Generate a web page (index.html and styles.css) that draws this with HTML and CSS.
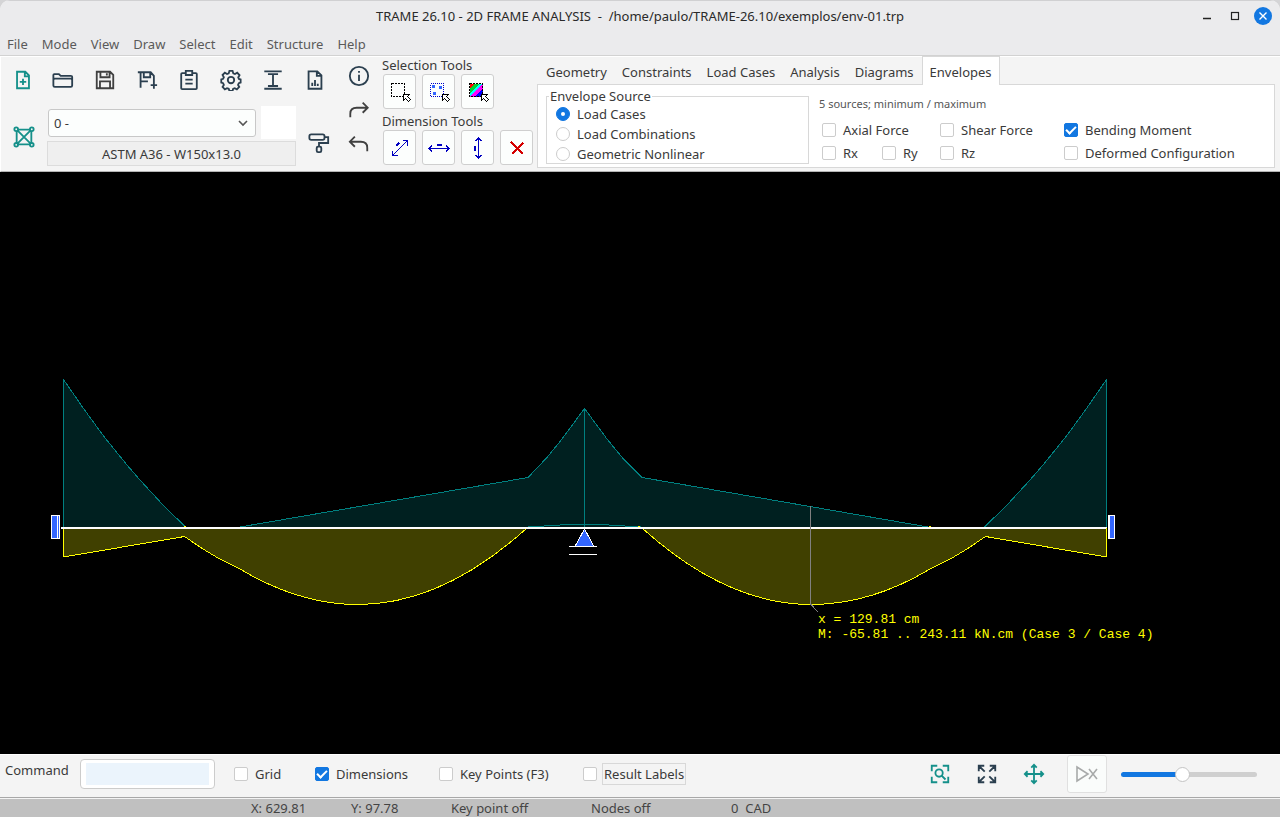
FILE: index.html
```html
<!DOCTYPE html>
<html lang="en">
<head>
<meta charset="utf-8">
<title>TRAME 26.10 - 2D FRAME ANALYSIS</title>
<link rel="stylesheet" href="styles.css">
</head>
<body>
<div class="window">
  <header class="titlebar">
    <h1 class="title">TRAME 26.10 - 2D FRAME ANALYSIS &nbsp;-&nbsp; /home/paulo/TRAME-26.10/exemplos/env-01.trp</h1>
    <div class="window-buttons">
      <button class="winbtn" aria-label="Minimize"><svg width="18" height="18"><path d="M5 11.5h8" stroke="#222" stroke-width="1.4"/></svg></button>
      <button class="winbtn" aria-label="Maximize"><svg width="18" height="18"><rect x="5.5" y="5.5" width="7" height="7" fill="none" stroke="#222" stroke-width="1.2"/></svg></button>
      <button class="winbtn" aria-label="Close"><svg width="18" height="18"><circle cx="9" cy="9" r="9" fill="#1277e1"/><path d="M5.5 5.5l7 7m0-7l-7 7" stroke="#fff" stroke-width="1.4"/></svg></button>
    </div>
  </header>
  <nav class="menubar">
    <button>File</button><button>Mode</button><button>View</button><button>Draw</button><button>Select</button><button>Edit</button><button>Structure</button><button>Help</button>
  </nav>

  <section class="toolbar">
    <div class="file-area">
      <div class="icon-row">
        <button class="tool first teal" aria-label="New"><svg class="ico" viewBox="0 0 24 24"><path d="M5.500 3h9l4 4v14h-13z M14 3v5h5 M12 10.500v7 M8.500 14h7"/></svg></button>
        <button class="tool" aria-label="Open"><svg class="ico" viewBox="0 0 24 24"><path d="M1.500 18V6.500q0-1 1-1h5l2 2h11q1.500 0 1.500 1V18q0 1.500-1.500 1.500h-17.500Q1.500 19.500 1.500 18z M1.500 12q0-1.500 1.500-1.500h17.500q1.500 0 1.500 1.500"/></svg></button>
        <button class="tool dark" aria-label="Save"><svg class="ico" viewBox="0 0 24 24"><path d="M3 3h14.500l3.500 3.500V21H3z M7 3v6h10V3 M14 4.500v2.500 M6.500 21v-7.500h11V21"/></svg></button>
        <button class="tool" aria-label="Save as"><svg class="ico" viewBox="0 0 24 24"><path d="M2 3.500h14l3.500 4V17 M5 4v16.500 M8.500 4v5h7V4 M5 13.500h8 M16 17.500h7 M19.500 14v7.500"/></svg></button>
        <button class="tool" aria-label="Clipboard"><svg class="ico" viewBox="0 0 24 24"><path d="M8 4.500H4.500Q3.500 4.500 3.500 5.500V21q0 1 1 1h15q1 0 1-1V5.500q0-1-1-1H16 M8.500 2h7v4.500h-7z M8 11.500h8 M8 16h8"/></svg></button>
        <button class="tool" aria-label="Settings"><svg class="ico" viewBox="0 0 24 24"><circle cx="12" cy="12" r="3.500"/><path d="M10.300 2h3.400l.8 2.800 1.800.7 2.500-1.400 2.500 2.600-1.400 2.500.7 1.700 1.900.5v3.400l-2 .7-.8 1.800 1.300 2.300-2.600 2.600-2.400-1.300-1.700.7-.6 2.400h-3.400l-.8-2.400-1.800-.7-2.400 1.300-2.500-2.600 1.400-2.300-.8-1.800-2-.6v-3.600l2-.6.8-1.700-1.400-2.500 2.500-2.400 2.400 1.400 1.800-.7z"/></svg></button>
        <button class="tool" aria-label="Profile"><svg class="ico" viewBox="0 0 24 24"><path d="M2.500 2.500h19 M6.500 5.500h11 M12 5.500v13 M6.500 18.500h11 M2.500 21.500h19"/></svg></button>
        <button class="tool" aria-label="Report"><svg class="ico" viewBox="0 0 24 24"><path d="M5 2.500h9.500l4.500 4.500v14.500h-14z M14 2.500v5h5 M9 18.500v-3.500 M12 18.500v-6.500 M15 18.500v-2.500"/></svg></button>
      </div>
      <div class="section-row">
        <button class="tool truss teal" aria-label="Frame"><svg class="ico" viewBox="0 0 24 24"><path d="M4 4h16 M4 20h16 M4 4v16 M20 4v16 M4 4l16 16 M20 4L4 20"/><g fill="#f4f4f4"><circle cx="3.500" cy="3.500" r="2"/><circle cx="20.500" cy="3.500" r="2"/><circle cx="3.500" cy="20.500" r="2"/><circle cx="20.500" cy="20.500" r="2"/></g></svg></button>
        <div class="section-picker">
          <div class="picker-row">
            <div class="combo"><select aria-label="Section"><option>0 -</option></select><svg width="10" height="7"><path d="M1 1l4 4 4-4" fill="none" stroke="#555" stroke-width="1.600"/></svg></div>
            <span class="swatch"></span>
          </div>
          <button class="section-name">ASTM A36 - W150x13.0</button>
        </div>
        <button class="tool roller" aria-label="Paint"><svg class="ico" viewBox="0 0 24 24"><rect x="1.500" y="2.500" width="16.500" height="6" rx="2"/><path d="M18 5.500h4V12h-10v4"/><rect x="9.500" y="16" width="5" height="6" rx="1.500"/></svg></button>
      </div>
    </div>

    <div class="history">
      <button class="tool" aria-label="Information"><svg class="ico" viewBox="0 0 24 24"><circle cx="12" cy="12" r="10"/><path d="M12 10.500V17.500 M12 6.500v2"/></svg></button>
      <button class="tool dark" aria-label="Redo"><svg class="ico" viewBox="0 0 24 24"><path d="M2.500 20v-4q0-6.500 7-6.500h12 M16 4l5.500 5.500-5.500 5.500"/></svg></button>
      <button class="tool dark" aria-label="Undo"><svg class="ico" viewBox="0 0 24 24"><path d="M21 20v-4q0-6.500-7-6.500h-12 M7.500 4l-5.500 5.500 5.500 5.500"/></svg></button>
    </div>

    <div class="tool-groups">
      <h2>Selection Tools</h2>
      <div class="tiles">
        <button class="tile" aria-label="Select window"><svg width="24" height="24" shape-rendering="crispEdges"><rect x="3.500" y="3.500" width="13" height="13" fill="none" stroke="#000" stroke-dasharray="2 1"/><use href="#cursor"/></svg></button>
        <button class="tile" aria-label="Select nodes"><svg width="24" height="24" shape-rendering="crispEdges"><rect x="3.500" y="3.500" width="13" height="13" fill="none" stroke="#0000c8" stroke-dasharray="1 1"/><path d="M5 5h3v3H5z M12 6h3v3h-3z M6 12h3v3H6z" fill="#3366ff"/><use href="#cursor"/></svg></button>
        <button class="tile" aria-label="Select by color"><svg width="24" height="24" shape-rendering="crispEdges"><defs><clipPath id="sq"><path d="M4 4h13v13H4z"/></clipPath><g id="cursor"><path d="M15.500 14.500h6l-2 2 3 3-2 2-3-3-2 2z" fill="#fff" stroke="#000"/></g></defs><g clip-path="url(#sq)"><path fill="#ff0" d="M4 4h13v13H4z"/><path fill="red" d="M4 4h5L4 9z"/><path fill="#00d030" d="M8 4h5L4 13V8z"/><path fill="#0ff" d="M13 4h3L4 16v-3z"/><path fill="#f0f" d="M16 4h1v4L8 17H4v-1z"/><path fill="#00f" d="M17 8v5l-4 4H8z"/></g><rect x="3.500" y="3.500" width="13" height="13" fill="none" stroke="#000" stroke-dasharray="2 1"/><use href="#cursor"/></svg></button>
      </div>
      <h2>Dimension Tools</h2>
      <div class="tiles">
        <button class="tile" aria-label="Aligned dimension"><svg width="24" height="24" shape-rendering="crispEdges" class="dim"><path d="M4.500 19.500L19.500 4.500 M4.500 14.500v5H9.500 M14.500 4.500h5V9.500"/><path d="M8 10l3-3" stroke-width="2"/></svg></button>
        <button class="tile" aria-label="Horizontal dimension"><svg width="24" height="24" shape-rendering="crispEdges" class="dim"><path d="M2 12.500h20 M5 9.500l-3 3 3 3 M19 9.500l3 3-3 3"/><path d="M10 9h5" stroke-width="2"/></svg></button>
        <button class="tile" aria-label="Vertical dimension"><svg width="24" height="24" shape-rendering="crispEdges" class="dim"><path d="M12.500 2v20 M9.500 5l3-3 3 3 M9.500 19l3 3 3-3"/><path d="M9 10v5" stroke-width="2"/></svg></button>
        <button class="tile" aria-label="Delete dimension"><svg width="24" height="24" shape-rendering="crispEdges"><path d="M6 6l12 12" stroke="#d40000" stroke-width="1.500"/><path d="M18 7L7 18" stroke="#d40000" stroke-width="2"/></svg></button>
      </div>
    </div>

    <div class="notebook">
      <div class="tabs" role="tablist">
        <button role="tab">Geometry</button><button role="tab">Constraints</button><button role="tab">Load Cases</button><button role="tab">Analysis</button><button role="tab">Diagrams</button><button role="tab" class="active" aria-selected="true">Envelopes</button>
      </div>
      <div class="panel" role="tabpanel">
        <fieldset class="source">
          <legend>Envelope Source</legend>
          <label><input type="radio" name="source" checked>Load Cases</label>
          <label><input type="radio" name="source">Load Combinations</label>
          <label><input type="radio" name="source">Geometric Nonlinear</label>
        </fieldset>
        <div class="results">
          <p class="summary">5 sources; minimum / maximum</p>
          <div class="checks">
            <label class="wide"><input type="checkbox">Axial Force</label>
            <label><input type="checkbox">Shear Force</label>
            <label><input type="checkbox" checked>Bending Moment</label>
            <label><input type="checkbox">Rx</label>
            <label><input type="checkbox">Ry</label>
            <label><input type="checkbox">Rz</label>
            <label><input type="checkbox">Deformed Configuration</label>
          </div>
        </div>
      </div>
    </div>
  </section>

  <main class="canvas">
    <svg class="drawing" viewBox="0 0 1280 582" role="img" aria-label="Bending moment envelope">
      <g shape-rendering="crispEdges">
        <g class="negative">
          <path d="M63.500 356V207.500L83.500 236.500 103.500 264 127 293 140 308 163 333 186 355.500V356z"/>
          <path d="M237 355.500L528 305.500 547 285.500 562 267 584.500 236.500 607 267 623 286.500 642 305.500 810 334.500 931 355.500z"/>
          <path d="M528 355L568 352.500H601L641 355 M584.500 236.500V356 M1106.500 356V207.500L1086.500 236.500 1066.500 264 1043 293 1030 308 1007 333 984 355.500V356z"/>
        </g>
        <g class="positive">
          <path d="M63.500 356V385L184.500 364.500 203 377 218 386 240 397Q299 432.500 358 432.500 442.500 432.500 527 356z"/>
          <path d="M642 356Q726.500 432.500 811 432.500 871 432.500 930 397L952 386 967 377 985.500 364.500 1106.500 385V356z"/>
        </g>
        <path d="M61 356H1107" stroke="#fff" stroke-width="2"/>
        <path d="M1106.500 356V385" stroke="#ff0"/>
        <path d="M184 354.500h2 M638 354.500h2 M929 354.500h2" stroke="#ff0"/>
        <path d="M810.500 334V432L818 440" fill="none" stroke="#808080"/>
        <g fill="#3366ff" stroke="#fff">
          <rect x="51.500" y="343.500" width="8" height="23"/><path d="M57.500 344V367"/>
          <rect x="1109.500" y="343.500" width="5" height="23"/><path d="M1108.500 343V367"/>
          <path d="M584.500 357L575 374.500H594z"/>
          <path d="M569 374.500H597 M569 382.500H597"/>
        </g>
      </g>
      <text class="readout" x="818" y="451">x = 129.81 cm</text>
      <text class="readout" x="818" y="466">M: -65.81 .. 243.11 kN.cm (Case 3 / Case 4)</text>
    </svg>
  </main>

  <section class="commandbar">
    <label class="command-label" for="command">Command</label>
    <input class="command" id="command" type="text">
    <div class="options">
      <label><input type="checkbox">Grid</label>
      <label><input type="checkbox" checked>Dimensions</label>
      <label><input type="checkbox">Key Points (F3)</label>
      <label><input type="checkbox"><span class="focused">Result Labels</span></label>
    </div>
    <div class="view-tools">
      <button class="tool teal" aria-label="Zoom window"><svg class="ico" viewBox="0 0 24 24"><path d="M3 9V3h6 M15 3h6v6 M21 15v6h-6 M9 21H3v-6 M13.500 13.500L18 18"/><circle cx="11" cy="11" r="4"/></svg></button>
      <button class="tool" aria-label="Zoom all"><svg class="ico" viewBox="0 0 24 24"><path d="M3 9V3h6 M3 3l6.500 6.500 M15 3h6v6 M21 3l-6.500 6.500 M21 15v6h-6 M21 21l-6.500-6.500 M9 21H3v-6 M3 21l6.500-6.500"/></svg></button>
      <button class="tool teal" aria-label="Pan"><svg class="ico" viewBox="0 0 24 24"><path d="M12 2v20 M2 12h20 M9 5l3-3 3 3 M9 19l3 3 3-3 M5 9l-3 3 3 3 M19 9l3 3-3 3"/></svg></button>
    </div>
    <button class="step" aria-label="Animate" disabled><svg width="24" height="18"><path d="M2 2v14l11-7z M14 4l8 10 M22 4l-8 10" fill="none" stroke="#a8aaaa" stroke-width="1.600"/></svg></button>
    <input class="slider" type="range" min="0" max="100" value="45" aria-label="Scale">
  </section>

  <footer class="statusbar">
    <span>X: 629.81</span><span>Y: 97.78</span><span>Key point off</span><span>Nodes off</span><span>0 &nbsp;CAD</span>
  </footer>
</div>
</body>
</html>
```
FILE: styles.css
```css
* { box-sizing: border-box; }
html { background: #d4d4d6; }
body {
  margin: 0;
  font: 13px/18px "Noto Sans", sans-serif;
  color: #3a3a3a;
}
button, input, select { font: inherit; color: inherit; margin: 0; }
button { border: 0; padding: 0; background: none; }
h1, h2, p { margin: 0; font: inherit; }

.window {
  display: flex;
  flex-direction: column;
  min-height: 100vh;
  background: #f4f4f4;
  border-radius: 10px 10px 0 0;
  overflow: hidden;
}

.titlebar {
  display: grid;
  grid-template-columns: 1fr auto 1fr;
  align-items: center;
  height: 32px;
  padding-bottom: 1px;
  background: #ebebed;
  box-shadow: inset 0 1px #d0d0d2;
}
.title { grid-column: 2; color: #2a2a2a; }
.window-buttons { display: flex; justify-content: flex-end; gap: 10px; padding-right: 8px; }
.winbtn, .winbtn svg { display: block; }

.menubar {
  display: flex;
  gap: 14px;
  height: 24px;
  padding: 0 7px;
  background: #ebebed;
  border-bottom: 1px solid #d2d2d2;
  color: #5a5a5a;
}

.toolbar {
  display: flex;
  height: 116px;
  border-left: 1px solid #fff;
  border-bottom: 1px solid #b4b4b4;
  box-shadow: inset 0 1px #fff;
}
.tool { display: grid; place-items: center; width: 42px; color: #2b3f4f; }
.tool.teal { color: #15908a; }
.tool.dark { color: #404040; }
.ico {
  width: 22px;
  height: 22px;
  fill: none;
  stroke: currentColor;
  stroke-width: 2;
}

.file-area { width: 340px; padding-left: 2px; }
.icon-row { display: flex; height: 48px; }
.icon-row .first { width: 39px; padding-left: 1px; }
.section-row { display: flex; padding-top: 2px; }
.truss { width: 44px; height: 62px; padding-right: 2px; }
.section-picker { display: flex; flex-direction: column; gap: 2px; width: 249px; }
.picker-row { display: flex; align-items: center; gap: 5px; padding-left: 1px; }
.combo { position: relative; width: 208px; }
.combo select {
  display: block;
  width: 100%;
  height: 28px;
  padding: 0 5px;
  appearance: none;
  background: #fcfefd;
  border: 1px solid #c8c8c8;
  border-radius: 3px;
}
.combo svg { position: absolute; right: 8px; top: 11px; pointer-events: none; }
.swatch { flex: 1; height: 33px; background: #fff; }
.section-name { height: 25px; background: #efefef; border: 1px solid #dcdcdc; }
.roller { width: 45px; height: 74px; }

.history {
  display: grid;
  grid-auto-rows: 34px;
  width: 36px;
  margin-right: 5px;
  padding-top: 3px;
  justify-content: center;
}

.tool-groups { width: 155px; }
.tiles { display: flex; gap: 6px; padding-left: 1px; margin-bottom: 3px; }
.tile {
  display: grid;
  place-items: center;
  width: 33px;
  height: 35px;
  background: #fcfefd;
  border: 1px solid #cfcfcf;
  border-radius: 3px;
}
.dim { fill: none; stroke: #0000c0; }

.notebook { display: flex; flex-direction: column; flex: 1; padding: 0 5px 3px 0; }
.tabs { display: flex; gap: 1px; height: 28px; padding-left: 2px; align-items: flex-end; }
.tabs button { height: 28px; padding: 4px 7px 0; }
.tabs .active {
  padding: 2px 7px 0;
  background: #fff;
  border: 1px solid #d8d8d8;
  border-bottom: 0;
  height: 29px;
  margin-bottom: -1px;
  z-index: 1;
}
.panel {
  display: flex;
  flex: 1;
  gap: 10px;
  padding: 2px 8px;
  background: #fff;
  border: 1px solid #d8d8d8;
}
.source {
  display: flex;
  flex-direction: column;
  gap: 2px;
  width: 263px;
  height: 77px;
  margin: 0;
  padding: 0 9px;
  border: 1px solid #d8d8d8;
}
.source legend { height: 18px; margin-left: -7px; padding: 0 1px; }
label { display: flex; align-items: center; gap: 7px; white-space: nowrap; }

input[type="checkbox"], input[type="radio"] {
  appearance: none;
  flex: none;
  display: grid;
  place-items: center;
  width: 14px;
  height: 14px;
  background: #fff;
  border: 1px solid #ccc;
  border-radius: 2px;
}
input[type="radio"] { border-radius: 50%; }
input[type="checkbox"]:checked, input[type="radio"]:checked { background: #1277e1; border-color: #1277e1; }
input[type="radio"]:checked::before { content: ""; width: 4px; height: 4px; border-radius: 50%; background: #fff; }
input[type="checkbox"]:checked::before {
  content: "";
  width: 8px;
  height: 4px;
  margin-bottom: 3px;
  border: solid #fff;
  border-width: 0 0 2px 2px;
  transform: rotate(-45deg);
}

.results { padding-top: 8px; }
.summary { font-size: 11px; color: #555; }
.checks {
  display: grid;
  grid-template-columns: 60px 58px 124px auto;
  row-gap: 5px;
  padding: 8px 0 0 3px;
}
.checks .wide { grid-column: span 2; }

.canvas { flex: 1; min-height: 0; background: #000; }
.drawing { display: block; width: 100%; }
.negative path { fill: #002020; stroke: #008080; }
.positive path { fill: #404000; stroke: #ff0; }
.readout { font: 13px "Liberation Mono", monospace; fill: #ff0; }

.commandbar {
  display: flex;
  align-items: center;
  height: 44px;
  padding: 0 23px 4px 5px;
  border-top: 1px solid #fff;
  border-bottom: 1px solid #a8a8a8;
}
.command-label { width: 75px; padding-bottom: 8px; }
.command {
  width: 135px;
  height: 30px;
  padding: 3px 5px;
  border: 1px solid #ccc;
  border-radius: 4px;
  background: linear-gradient(#ebf4fc, #ebf4fc) content-box, #fff;
}
.options { display: grid; grid-template-columns: 81px 124px 144px auto; padding-left: 19px; }
.focused { margin-left: -2px; padding: 1px; border: 1px solid #d8d8d8; }
.view-tools { display: flex; gap: 5px; margin-left: auto; padding-right: 12px; }
.step {
  display: grid;
  place-items: center;
  width: 40px;
  height: 38px;
  background: #fafcfb;
  border: 1px solid #e0e0e0;
  border-radius: 3px;
}
.slider { appearance: none; width: 136px; height: 16px; margin-left: 14px; background: none; }
.slider::-webkit-slider-runnable-track {
  height: 5px;
  border-radius: 3px;
  background: linear-gradient(to right, #1277e1 45%, #cfcfcf 45%);
}
.slider::-webkit-slider-thumb {
  appearance: none;
  width: 15px;
  height: 15px;
  margin-top: -5px;
  background: #fff;
  border: 1px solid #c4c4c4;
  border-radius: 50%;
}

.statusbar {
  display: grid;
  grid-template-columns: 100px 100px 140px 140px auto;
  padding-left: 251px;
  height: 19px;
  background: #c0c0c0;
  border-top: 1px solid #f4f4f4;
  color: #444;
}
```
